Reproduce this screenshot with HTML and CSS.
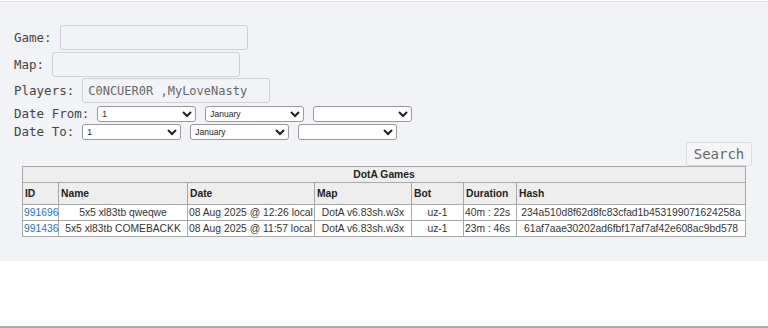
FILE: index.html
```html
<!DOCTYPE html>
<html lang="en">
<head>
    <meta charset="UTF-8">
    <meta name="viewport" content="width=device-width, initial-scale=1.0">
    <title>DotA Games</title>
    <link rel="stylesheet" href="styles.css">
</head>
<body>
    <div class="panel">
        <form class="search-form">
            <div class="field">
                <label>Game:</label>
                <input type="text" class="text-input">
            </div>
            <div class="field">
                <label>Map:</label>
                <input type="text" class="text-input">
            </div>
            <div class="field players">
                <label>Players:</label>
                <input type="text" class="text-input" value="C0NCUER0R ,MyLoveNasty">
            </div>
            <div class="field date">
                <label>Date From:</label>
                <select class="date-select"><option>1</option></select>
                <select class="date-select"><option>January</option></select>
                <select class="date-select"><option></option></select>
            </div>
            <div class="field date">
                <label>Date To:</label>
                <select class="date-select"><option>1</option></select>
                <select class="date-select"><option>January</option></select>
                <select class="date-select"><option></option></select>
            </div>
            <div class="actions">
                <button type="button" class="search-btn">Search</button>
            </div>
        </form>

        <table class="games">
            <colgroup>
                <col class="col-id">
                <col class="col-name">
                <col class="col-date">
                <col class="col-map">
                <col class="col-bot">
                <col class="col-dur">
                <col class="col-hash">
            </colgroup>
            <thead>
                <tr>
                    <th colspan="7" class="caption">DotA Games</th>
                </tr>
                <tr>
                    <th>ID</th>
                    <th>Name</th>
                    <th>Date</th>
                    <th>Map</th>
                    <th>Bot</th>
                    <th>Duration</th>
                    <th>Hash</th>
                </tr>
            </thead>
            <tbody>
                <tr>
                    <td><a href="#">991696</a></td>
                    <td class="center">5x5 xl83tb qweqwe</td>
                    <td>08 Aug 2025 @ 12:26 local</td>
                    <td class="center">DotA v6.83sh.w3x</td>
                    <td class="center">uz-1</td>
                    <td>40m : 22s</td>
                    <td class="center">234a510d8f62d8fc83cfad1b453199071624258a</td>
                </tr>
                <tr>
                    <td><a href="#">991436</a></td>
                    <td class="center">5x5 xl83tb COMEBACKK</td>
                    <td>08 Aug 2025 @ 11:57 local</td>
                    <td class="center">DotA v6.83sh.w3x</td>
                    <td class="center">uz-1</td>
                    <td>23m : 46s</td>
                    <td class="center">61af7aae30202ad6fbf17af7af42e608ac9bd578</td>
                </tr>
            </tbody>
        </table>
    </div>
    <div class="footer-line"></div>
</body>
</html>
```

FILE: styles.css
```css
* {
    margin: 0;
    padding: 0;
    box-sizing: border-box;
}

body {
    background: #fff;
    font-family: "DejaVu Sans Mono", monospace;
    height: 328px;
    display: flex;
    flex-direction: column;
}

.panel {
    background: #f2f3f7;
    border-top: 1px solid #e0e1e5;
    margin-top: 1px;
    height: 260px;
    padding: 23px 16px 0 14px;
}

.footer-line {
    margin-top: auto;
    height: 2px;
    background: #a9abb3;
}

.search-form {
    display: flex;
    flex-direction: column;
}

.field {
    display: flex;
    align-items: center;
    color: #444;
    font-size: 12.5px;
}

.field label {
    margin-right: 8px;
    white-space: pre;
}

.field + .field {
    margin-top: 2px;
}

.field.players {
    margin-top: 1px;
}

.text-input {
    width: 188px;
    height: 25px;
    border: 1px solid #cfd0d4;
    border-radius: 3px;
    background: #f2f3f7;
    font-family: "DejaVu Sans Mono", monospace;
    font-size: 12px;
    color: #666;
    padding: 0 5px;
    outline: none;
}

.field.date {
    height: 17px;
}

.field.date + .field.date {
    margin-top: 1px;
}

.date-select {
    width: 99px;
    height: 16px;
    margin-right: 9px;
    border: 1px solid #999;
    border-radius: 3px;
    background: #fff;
    font-family: "Liberation Sans", Arial, sans-serif;
    font-size: 8.5px;
    color: #222;
}

.actions {
    display: flex;
    justify-content: flex-end;
    margin-top: 2px;
}

.search-btn {
    width: 66px;
    height: 24px;
    border: 1px solid #dcdde1;
    border-radius: 2px;
    background: #f5f5f7;
    color: #666;
    font-family: "DejaVu Sans Mono", monospace;
    font-size: 14px;
}

.games {
    width: 723px;
    margin-left: 8px;
    table-layout: fixed;
    border-collapse: collapse;
    border: 1px solid #9a9a9a;
    font-family: "Liberation Sans", Arial, sans-serif;
    font-size: 10.3px;
    color: #333;
}

.games th,
.games td {
    border: 1px solid #a8a8a8;
    text-align: left;
    padding: 0 1px;
    white-space: nowrap;
}

.games th {
    background: #eeeeee;
    font-weight: bold;
    color: #222;
    padding: 0 2px;
}

.games th.caption {
    text-align: center;
    height: 16px;
}

.games thead tr:nth-child(2) th {
    height: 22px;
}

.games td {
    background: #fff;
    height: 16px;
}

.games td.center {
    text-align: center;
}

.games a {
    color: #1a73e8;
    text-decoration: none;
}

.col-id { width: 36px; }
.col-name { width: 129px; }
.col-date { width: 127px; }
.col-map { width: 97px; }
.col-bot { width: 52px; }
.col-dur { width: 53px; }
.col-hash { width: 229px; }
```
